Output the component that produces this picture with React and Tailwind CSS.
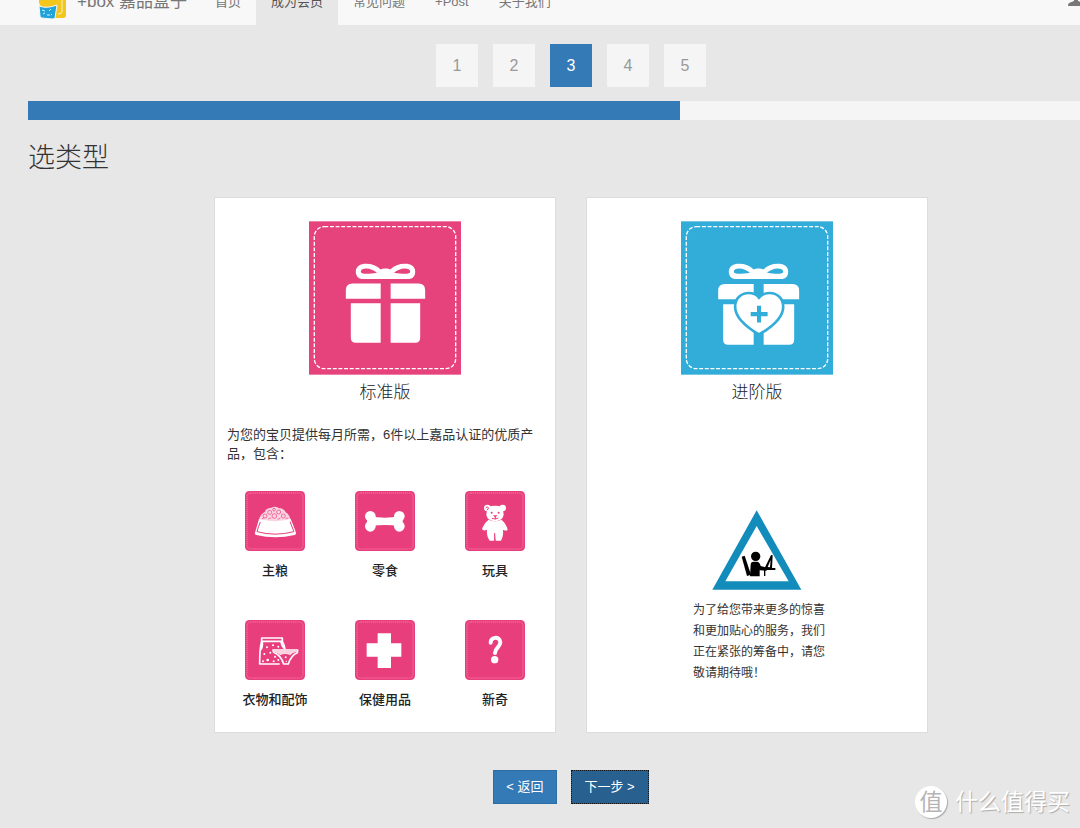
import React, { useState } from "react";

const navItems = ["首页", "成为会员", "常见问题", "+Post", "关于我们"];

const Logo = () => (
  <svg viewBox="0 0 29 40" className="w-[29px] h-10 shrink-0" aria-hidden="true">
    <path d="M1 8Q1 0 8 0H20Q28 0 28 8V35Q28 38 25 38H17V27H4Q1 25 1 22Z" fill="#f3c61c" />
    <path d="M24 20V32Q24 34 20 34" fill="none" stroke="#f8f0c8" strokeWidth="1" />
    <path d="M1 26Q9 29 19 25L17 38Q17 39 14 39L4 38Q2 38 2 36Z" fill="#1fa3d8" stroke="#f8f8f8" strokeWidth="1" />
    <path d="M4 30l3 1M5 34l2-1M13 29l-2 2M9 35l3 0M13 34l1 1" fill="none" stroke="#d6f0fa" strokeWidth="1" />
  </svg>
);

const Bow = () => (
  <path
    fillRule="evenodd"
    d="M190 206C175 206 168 196 168 184C168 168 182 160 199 160C217 160 232 166 243 177C250 173 265 173 272 177C283 166 298 160 316 160C334 160 347 168 347 184C347 197 340 206 325 206ZM183 184C183 192 205 191 232 187C222 179 211 174 199 174C190 174 183 177 183 184ZM332 184C332 177 325 174 316 174C304 174 292 179 283 187C310 191 332 192 332 184Z"
  />
);

const GiftIcon = () => (
  <svg viewBox="27 32 458 462" className="w-[152px] h-[154px]" aria-hidden="true">
    <rect x="27" y="32" width="458" height="462" fill="#e6427b" />
    <rect x="43" y="48" width="426" height="428" rx="30" fill="none" stroke="#fff" strokeWidth="4" strokeDasharray="12 5" />
    <g fill="#fff">
      <Bow />
      <path d="M158 219H243V265H138V239Q138 219 158 219ZM273 219H357Q377 219 377 239V265H273Z" />
      <path d="M153 279H243V398H168Q153 398 153 383ZM273 279H362V383Q362 398 347 398H273Z" />
    </g>
  </svg>
);

const HeartGiftIcon = () => (
  <svg viewBox="30 32 458 462" className="w-[152px] h-[154px]" aria-hidden="true">
    <rect x="30" y="32" width="458" height="462" fill="#32acd9" />
    <rect x="46" y="48" width="426" height="428" rx="30" fill="none" stroke="#fff" strokeWidth="4" strokeDasharray="12 5" />
    <g fill="#fff">
      <g transform="translate(6 0)"><Bow /></g>
      <path d="M162 221H249V267H142V241Q142 221 162 221ZM279 221H366Q386 221 386 241V267H279Z" />
      <path d="M157 282H249V404H172Q157 404 157 389ZM279 282H371V389Q371 404 356 404H279Z" />
    </g>
    <path
      d="M265 373C235 355 193 325 193 289C193 262 213 248 234 248C247 248 258 253 265 262C272 253 283 248 297 248C318 248 338 262 338 289C338 325 296 355 265 373Z"
      fill="#fff"
      stroke="#32acd9"
      strokeWidth="8"
    />
    <path d="M259 286H271V305H291V318H271V337H259V318H240V305H259Z" fill="#32acd9" />
  </svg>
);

const Tile = ({ children }) => (
  <svg viewBox="0 0 180 180" className="w-[60px] h-[60px]" aria-hidden="true">
    <rect width="180" height="180" rx="13" fill="#e83f7c" />
    <rect x="6" y="6" width="168" height="168" rx="11" fill="none" stroke="#f593b7" strokeWidth="2" strokeDasharray="4 2" />
    {children}
  </svg>
);

const BowlIcon = () => (
  <Tile>
    <path d="M42 86C46 70 54 66 60 62C64 50 74 52 79 50C88 44 98 48 102 52C112 50 120 58 122 64C130 68 134 76 137 86Q90 98 42 86Z" fill="#fbd3e1" />
    <g fill="none" stroke="#e83f7c" strokeWidth="2">
      <circle cx="60" cy="75" r="6" />
      <circle cx="74" cy="64" r="6" />
      <circle cx="88" cy="75" r="7" />
      <circle cx="101" cy="63" r="6" />
      <circle cx="115" cy="75" r="6" />
      <circle cx="87" cy="56" r="4" />
      <path d="M50 84l8-4M70 84l8-3M98 85l8-4M122 83l8-2" />
    </g>
    <path d="M42 84Q90 97 137 84C143 98 149 112 153 126Q154 130 149 132Q91 146 34 132Q28 130 30 125Z" fill="#fff" />
    <path d="M46 93Q40 107 36 122Q90 137 146 122" fill="none" stroke="#e83f7c" strokeWidth="3" />
    <path d="M135 92L147 122" fill="none" stroke="#e83f7c" strokeWidth="3" />
  </Tile>
);

const BoneIcon = () => (
  <Tile>
    <g fill="#fff">
      <circle cx="46" cy="76" r="16" />
      <circle cx="46" cy="106" r="16" />
      <circle cx="133" cy="76" r="16" />
      <circle cx="133" cy="106" r="16" />
      <path d="M46 76Q90 84 133 76V106Q90 98 46 106Z" />
      <rect x="36" y="80" width="14" height="22" />
      <rect x="129" y="80" width="14" height="22" />
    </g>
  </Tile>
);

const BearIcon = () => (
  <Tile>
    <g fill="#fff">
      <circle cx="67" cy="51" r="10" />
      <circle cx="113" cy="51" r="10" />
      <path d="M67 48Q90 40 113 48L116 72Q112 90 90 91Q68 90 64 72Z" />
      <path d="M71 86Q90 95 109 86Q124 98 128 116Q124 121 114 116Q116 134 108 149H92L90 128L88 149H74Q64 136 66 116Q56 121 51 115Q56 98 71 86Z" />
    </g>
    <path d="M62 51Q67 45 70 50Q71 56 65 57" fill="none" stroke="#e83f7c" strokeWidth="3" />
    <g fill="#e83f7c">
      <circle cx="80" cy="65" r="3" />
      <circle cx="101" cy="65" r="3" />
      <path d="M84 73H97L91 80Z" />
    </g>
    <path d="M81 82Q91 87 100 81M91 78V84M89 126V150" fill="none" stroke="#e83f7c" strokeWidth="3" />
  </Tile>
);

const ClothesIcon = () => (
  <Tile>
    <g fill="none" stroke="#fff" strokeWidth="5" strokeLinejoin="round">
      <path d="M50 54H112V64H50Z" />
      <path d="M50 64Q44 84 44 132H104M112 64Q118 74 120 88M52 66Q54 84 44 92M108 66Q110 78 118 86" />
      <path d="M84 90H158L157 98Q138 106 130 132H116Q108 106 86 97Z" />
    </g>
    <path d="M86 91H156V96Q140 99 136 106Q120 98 106 106Q100 98 86 96Z" fill="#fbd3e1" />
    <g fill="#fff">
      <circle cx="66" cy="82" r="3" />
      <circle cx="84" cy="76" r="3" />
      <circle cx="100" cy="80" r="3" />
      <circle cx="58" cy="102" r="3" />
      <circle cx="76" cy="98" r="3" />
      <circle cx="90" cy="110" r="3" />
      <circle cx="68" cy="120" r="4" />
      <circle cx="86" cy="124" r="3" />
      <circle cx="54" cy="124" r="3" />
      <circle cx="100" cy="120" r="3" />
      <circle cx="122" cy="112" r="3" />
      <circle cx="124" cy="124" r="2" />
    </g>
  </Tile>
);

const CrossIcon = () => (
  <Tile>
    <path d="M68 40H108V70H139V110H108V144H68V110H35V70H68Z" fill="#fff" />
  </Tile>
);

const QuestionIcon = () => (
  <Tile>
    <path d="M77 68C76 50 105 48 106 67C106 82 90 82 90 99" fill="none" stroke="#fff" strokeWidth="12" strokeLinecap="round" />
    <circle cx="89" cy="119" r="11" fill="#fff" />
  </Tile>
);

const products = [
  { label: "主粮", Icon: BowlIcon },
  { label: "零食", Icon: BoneIcon },
  { label: "玩具", Icon: BearIcon },
  { label: "衣物和配饰", Icon: ClothesIcon },
  { label: "保健用品", Icon: CrossIcon },
  { label: "新奇", Icon: QuestionIcon },
];

// warning sign: someone working at a desk
const WorkingSign = () => (
  <svg viewBox="90 28 270 240" className="w-[90px] h-20" aria-hidden="true">
    <path fillRule="evenodd" d="M224 29L358 267H91ZM224 76L130 242H320Z" fill="#128dbb" />
    <circle cx="221" cy="167" r="14" fill="#000" />
    <path d="M179 168L188 165L207 222L195 226Z" fill="#000" />
    <path d="M206 192Q206 183 215 183H226Q233 184 236 196L254 201V210L233 209V227H204Z" fill="#000" />
    <path fillRule="evenodd" d="M248 202L267 163L272 164L270 202H280V208H238V202ZM257 199L266 178L264 200Z" fill="#000" />
    <path d="M248 207V226" stroke="#000" strokeWidth="4" />
  </svg>
);

const Card = ({ title, picture, children }) => (
  <section className="w-[342px] h-[536px] bg-white border border-[#dcdcdc] flex flex-col items-center pt-[23px]">
    {picture}
    <h3 className="mt-1 text-[17px] leading-7 font-light text-[#222]">{title}</h3>
    {children}
  </section>
);

const App = () => {
  const [step, setStep] = useState(3);

  return (
    <div className="relative overflow-hidden min-h-screen bg-[#e7e7e7] text-[#333] font-['Liberation_Sans','Noto_Sans_CJK_SC',sans-serif]">
      <div className="-mr-[62px]">
        <header className="-mt-6 h-[50px] bg-[#f8f8f8] border-b border-[#e7e7e7] flex items-start text-[#777]">
          <a href="#" className="pl-[38px] pt-1 w-[200px] flex items-start gap-[10px]">
            <Logo />
            <span className="text-[17px] leading-[44px] whitespace-nowrap">+box 嘉品盒子</span>
          </a>
          <nav className="flex">
            {navItems.map((item) => (
              <a
                key={item}
                href="#"
                className={`px-[15px] h-[50px] text-[13px] leading-[52px] ${item === "成为会员" ? "bg-[#e7e7e7] text-[#555]" : ""}`}
              >
                {item}
              </a>
            ))}
          </nav>
          <a href="#" aria-label="用户" className="ml-auto mr-[58px] pt-[14px]">
            <svg viewBox="0 0 16 16" className="w-4 h-4" fill="#777" aria-hidden="true">
              <path d="M8 0Q12 0 12 5Q12 8 10 10V11L15 13Q16 14 16 16H0Q0 14 1 13L6 11V10Q4 8 4 5Q4 0 8 0Z" />
            </svg>
          </a>
        </header>

        <main className="px-7">
          <div className="mt-[18px] flex justify-center gap-[15px]">
            {[1, 2, 3, 4, 5].map((n) => (
              <button
                key={n}
                onClick={() => setStep(n)}
                className={`w-[42px] h-[43px] text-base ${n === step ? "bg-[#337ab7] text-white" : "bg-[#f5f5f5] text-[#999]"}`}
              >
                {n}
              </button>
            ))}
          </div>

          <div className="mt-[14px] h-[19px] bg-[#f5f5f5]">
            <div className="h-full bg-[#337ab7]" style={{ width: `${step * 20}%` }} />
          </div>

          <h2 className="mt-[18px] text-[27px] leading-10 font-light text-[#333]">选类型</h2>

          <div className="mt-[19px] flex justify-center gap-[30px]">
            <Card title="标准版" picture={<GiftIcon />}>
              <p className="mt-[18px] px-3 self-stretch text-[13px] leading-[19px]">
                为您的宝贝提供每月所需，6件以上嘉品认证的优质产品，包含：
              </p>
              <ul className="mt-7 grid grid-cols-[110px_110px_110px] gap-y-[39px]">
                {products.map(({ label, Icon }) => (
                  <li key={label} className="flex flex-col items-center gap-[10px]">
                    <Icon />
                    <span className="text-[13px] leading-5 font-medium text-[#222]">{label}</span>
                  </li>
                ))}
              </ul>
            </Card>
            <Card title="进阶版" picture={<HeartGiftIcon />}>
              <div className="mt-[103px] flex flex-col items-center">
                <WorkingSign />
                <p className="mt-[10px] w-[136px] pl-1 text-xs leading-[21px]">
                  为了给您带来更多的惊喜和更加贴心的服务，我们正在紧张的筹备中，请您敬请期待哦！
                </p>
              </div>
            </Card>
          </div>

          <div className="mt-[37px] mb-6 flex justify-center gap-[14px] text-[13px] text-white">
            <button className="h-[34px] px-3 bg-[#337ab7] border border-[#2e6da4]" onClick={() => setStep(Math.max(1, step - 1))}>
              &lt; 返回
            </button>
            <button className="h-[34px] px-[13px] bg-[#286090] border border-dotted border-[#111]" onClick={() => setStep(Math.min(5, step + 1))}>
              下一步 &gt;
            </button>
          </div>
        </main>
      </div>

      <div className="absolute right-[10px] bottom-[10px] flex items-center gap-[8px] text-white">
        <span className="w-8 h-8 rounded-full bg-white text-[#b5b5b5] text-[23px] leading-8 text-center shadow-[1px_1px_1px_#aaa]">值</span>
        <span className="text-[23px] leading-8 [text-shadow:1px_1px_1px_#aaa]">什么值得买</span>
      </div>
    </div>
  );
};

export default App;
